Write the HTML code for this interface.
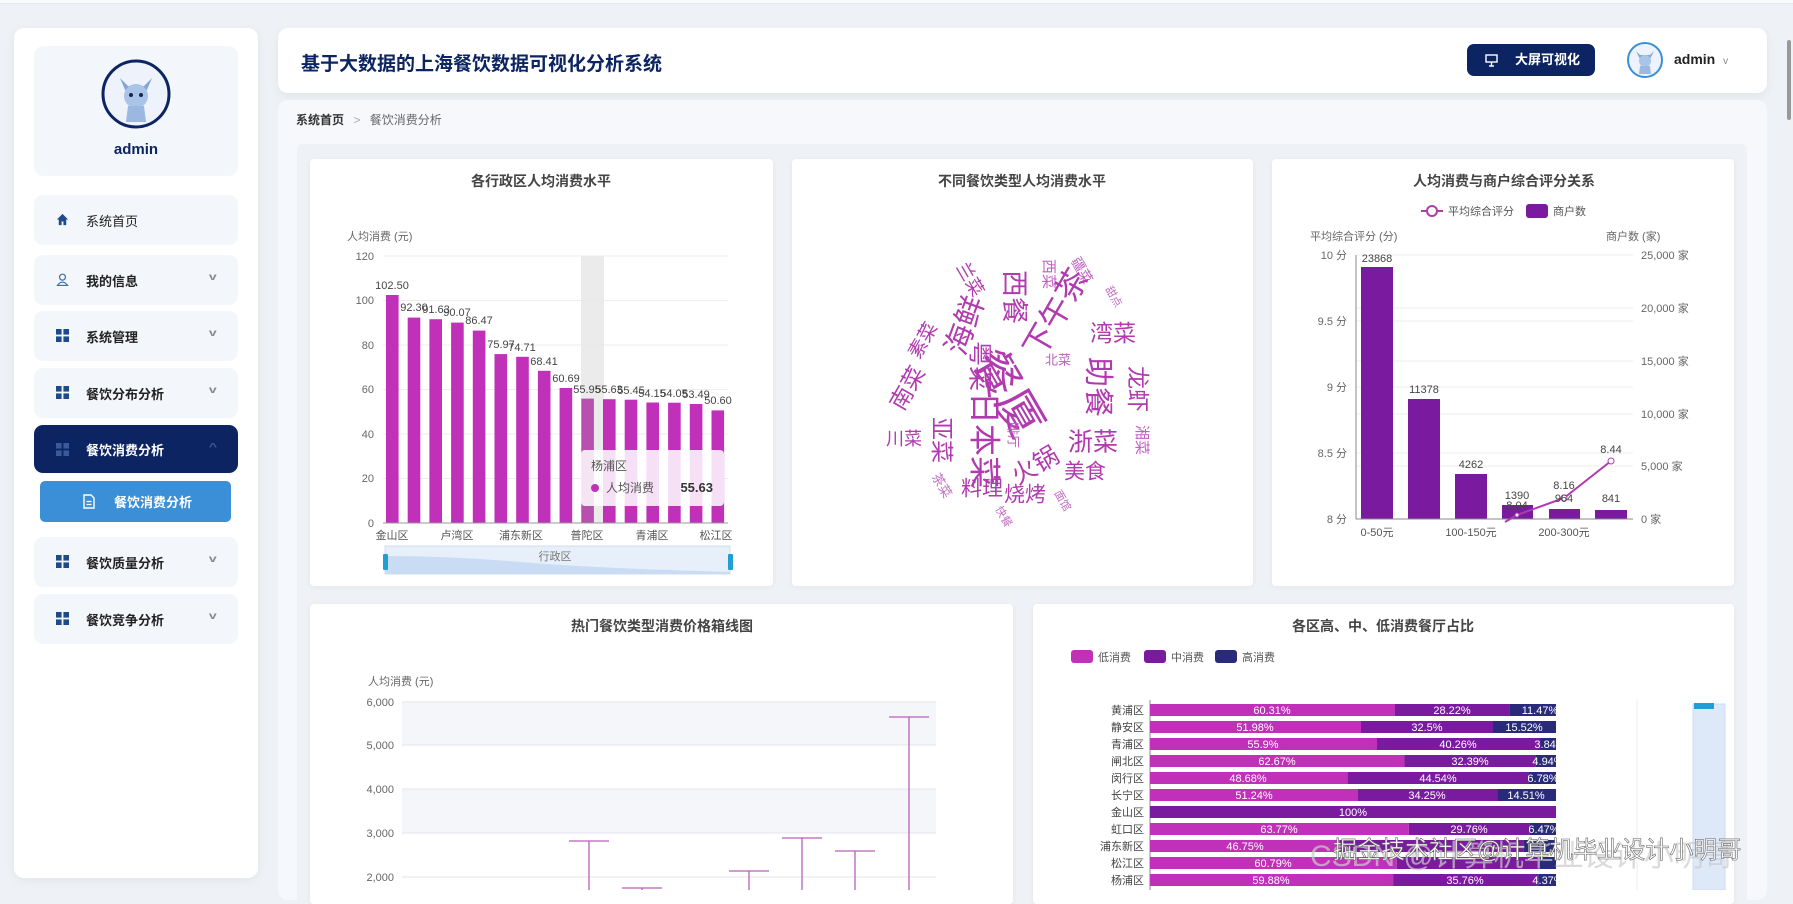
<!DOCTYPE html>
<html><head><meta charset="utf-8"><style>
*{margin:0;padding:0;box-sizing:border-box}
body{width:1793px;height:890px;overflow:hidden;background:#eef1f5;font-family:"Liberation Sans","Noto Sans CJK SC",sans-serif;position:relative}
.abs{position:absolute}
.side{left:14px;top:28px;width:244px;height:850px;background:#fff;border-radius:10px;box-shadow:0 2px 10px rgba(0,0,0,.06)}
.user{left:34px;top:46px;width:204px;height:130px;background:#f3f6fa;border-radius:10px}
.mi{left:34px;width:204px;height:50px;background:#f3f6fa;border-radius:9px;font-size:13px;color:#222;display:flex;align-items:center;padding-left:52px;font-weight:bold}
.mi.n{font-weight:normal}
.mi .ic{position:absolute;left:22px;top:18px;width:13px;height:13px}
.mi .ch{position:absolute;right:22px;top:17px;font-size:10px;color:#888;transform:scaleX(1.4)}
.card{background:#fff;border-radius:4px;box-shadow:0 1px 6px rgba(0,0,0,.05)}
</style></head><body>
<div class="abs" style="left:0;top:0;width:1793px;height:4px;background:#fafbfc;border-bottom:1px solid #e6e9ee"></div>
<div class="abs side"></div>
<div class="abs user"></div>
<svg class="abs" style="left:100px;top:58px" width="72" height="72" viewBox="0 0 72 72"><circle cx="36" cy="36" r="33" fill="#eef3fb" stroke="#0c2461" stroke-width="3"/><path d="M20 20 L26 34 L46 34 L52 20 L44 28 L28 28Z" fill="#7fa6d8"/><circle cx="36" cy="38" r="12" fill="#a8c4e8"/><path d="M26 64 L28 48 L44 48 L46 64Z" fill="#9bb8e0"/><circle cx="31" cy="37" r="2" fill="#224"/><circle cx="41" cy="37" r="2" fill="#224"/></svg>
<div class="abs" style="left:34px;top:141px;width:204px;text-align:center;font-size:15px;font-weight:bold;color:#0c2461">admin</div>

<div class="abs mi n" style="top:195px"><svg class="ic" viewBox="0 0 14 14"><path d="M1 7 L7 1 L13 7 L11 7 L11 13 L8 13 L8 9 L6 9 L6 13 L3 13 L3 7Z" fill="#1e4a8a"/></svg>系统首页</div>
<div class="abs mi" style="top:255px"><svg class="ic" viewBox="0 0 14 14"><circle cx="7" cy="4.5" r="3.2" fill="none" stroke="#3a6fb0" stroke-width="1.3"/><path d="M1.5 13.5 Q7 6 12.5 13.5Z" fill="none" stroke="#3a6fb0" stroke-width="1.3"/></svg>我的信息<span class="ch">v</span></div>
<div class="abs mi" style="top:311px"><svg class="ic" viewBox="0 0 14 14" fill="#1e4a8a"><rect x="0" y="0" width="6" height="6"/><rect x="8" y="0" width="6" height="6"/><rect x="0" y="8" width="6" height="6"/><rect x="8" y="8" width="6" height="6"/></svg>系统管理<span class="ch">v</span></div>
<div class="abs mi" style="top:368px"><svg class="ic" viewBox="0 0 14 14" fill="#1e4a8a"><rect x="0" y="0" width="6" height="6"/><rect x="8" y="0" width="6" height="6"/><rect x="0" y="8" width="6" height="6"/><rect x="8" y="8" width="6" height="6"/></svg>餐饮分布分析<span class="ch">v</span></div>
<div class="abs mi" style="top:425px;height:48px;background:#0c2461;color:#fff"><svg class="ic" viewBox="0 0 14 14" fill="#3a5a9a"><rect x="0" y="0" width="6" height="6"/><rect x="8" y="0" width="6" height="6"/><rect x="0" y="8" width="6" height="6"/><rect x="8" y="8" width="6" height="6"/></svg>餐饮消费分析<span class="ch" style="color:#3a5a9a">^</span></div>
<div class="abs" style="left:40px;top:481px;width:191px;height:41px;background:#3a8fd6;border-radius:5px;color:#fff;font-size:13px;font-weight:bold;display:flex;align-items:center;padding-left:74px"><svg class="abs" style="left:43px;top:13px" width="12" height="15" viewBox="0 0 12 15"><path d="M1 1 H8 L11 4 V14 H1Z" fill="none" stroke="#fff" stroke-width="1.4"/><path d="M3.5 7.5 H8.5 M3.5 10.5 H8.5" stroke="#fff" stroke-width="1.2"/></svg>餐饮消费分析</div>
<div class="abs mi" style="top:537px"><svg class="ic" viewBox="0 0 14 14" fill="#1e4a8a"><rect x="0" y="0" width="6" height="6"/><rect x="8" y="0" width="6" height="6"/><rect x="0" y="8" width="6" height="6"/><rect x="8" y="8" width="6" height="6"/></svg>餐饮质量分析<span class="ch">v</span></div>
<div class="abs mi" style="top:594px"><svg class="ic" viewBox="0 0 14 14" fill="#1e4a8a"><rect x="0" y="0" width="6" height="6"/><rect x="8" y="0" width="6" height="6"/><rect x="0" y="8" width="6" height="6"/><rect x="8" y="8" width="6" height="6"/></svg>餐饮竞争分析<span class="ch">v</span></div>

<div class="abs" style="left:278px;top:28px;width:1489px;height:65px;background:#fff;border-radius:10px;box-shadow:0 3px 10px rgba(0,0,0,.06)"></div>
<div class="abs" style="left:301px;top:49px;font-size:19px;font-weight:bold;color:#0c2461">基于大数据的上海餐饮数据可视化分析系统</div>
<div class="abs" style="left:1467px;top:44px;width:128px;height:32px;background:#0c2461;border-radius:7px;color:#fff;font-size:13px;font-weight:bold;line-height:32px;padding-left:48px"><svg class="abs" style="left:18px;top:10px" width="13" height="13" viewBox="0 0 13 13"><rect x="1" y="1" width="11" height="7" fill="none" stroke="#fff" stroke-width="1.4"/><path d="M6.5 8 V12 M4 12 H9" stroke="#fff" stroke-width="1.4"/></svg>大屏可视化</div>
<svg class="abs" style="left:1626px;top:41px" width="38" height="38" viewBox="0 0 38 38"><circle cx="19" cy="19" r="17" fill="#eef3fb" stroke="#3a8fd6" stroke-width="2"/><path d="M10 10 L14 18 L24 18 L28 10 L24 14 L14 14Z" fill="#7fa6d8"/><circle cx="19" cy="20" r="6" fill="#a8c4e8"/><path d="M13 33 L14 25 L24 25 L25 33Z" fill="#9bb8e0"/></svg>
<div class="abs" style="left:1674px;top:51px;font-size:14px;font-weight:bold;color:#222">admin <span style="font-weight:normal;color:#888;font-size:10px;margin-left:4px">v</span></div>

<div class="abs" style="left:278px;top:100px;width:1489px;height:800px;background:#f6f8fb;border-radius:10px"></div>
<div class="abs" style="left:296px;top:111px;font-size:12px;color:#333"><b>系统首页</b> <span style="color:#aaa;margin:0 6px">&gt;</span> <span style="color:#666">餐饮消费分析</span></div>
<div class="abs" style="left:297px;top:144px;width:1450px;height:760px;background:#eef1f5;border-radius:6px"></div>
<div class="abs card" style="left:310px;top:159px;width:463px;height:427px"></div>
<div class="abs card" style="left:792px;top:159px;width:461px;height:427px"></div>
<div class="abs card" style="left:1272px;top:159px;width:462px;height:427px"></div>
<div class="abs card" style="left:310px;top:604px;width:703px;height:300px"></div>
<div class="abs card" style="left:1033px;top:604px;width:701px;height:300px"></div>
<div class="abs" style="left:1787px;top:40px;width:4px;height:80px;background:#999;border-radius:2px"></div>

<svg class="abs" style="left:0;top:0" width="1793" height="890" font-family="Liberation Sans, Noto Sans CJK SC, sans-serif">
<g font-size="14" font-weight="bold" fill="#444" text-anchor="middle">
<text x="541" y="186">各行政区人均消费水平</text>
<text x="1022" y="186">不同餐饮类型人均消费水平</text>
<text x="1504" y="186">人均消费与商户综合评分关系</text>
<text x="662" y="631">热门餐饮类型消费价格箱线图</text>
<text x="1383" y="631">各区高、中、低消费餐厅占比</text>
</g>
<!-- chart1 -->
<g font-size="11" fill="#666">
<text x="347" y="240">人均消费 (元)</text>
<g text-anchor="end"><text x="374" y="260">120</text><text x="374" y="304">100</text><text x="374" y="349">80</text><text x="374" y="393">60</text><text x="374" y="438">40</text><text x="374" y="482">20</text><text x="374" y="527">0</text></g>
</g>
<g stroke="#eee"><path d="M383 256H728M383 300.5H728M383 345H728M383 389.5H728M383 434H728M383 478.5H728"/></g>
<rect x="581" y="256" width="23" height="267" fill="#e6e6e6" opacity=".8"/>
<g fill="#c030b8">
<rect x="386" y="295" width="12.6" height="228"/><rect x="407.7" y="317.6" width="12.6" height="205.4"/><rect x="429.4" y="319.2" width="12.6" height="203.8"/><rect x="451.1" y="322.6" width="12.6" height="200.4"/><rect x="472.8" y="330.6" width="12.6" height="192.4"/><rect x="494.5" y="354.1" width="12.6" height="168.9"/><rect x="516.2" y="356.8" width="12.6" height="166.2"/><rect x="537.9" y="370.8" width="12.6" height="152.2"/><rect x="559.6" y="388" width="12.6" height="135"/><rect x="581.3" y="398.6" width="12.6" height="124.4" fill="#b850b0"/><rect x="603" y="399.2" width="12.6" height="123.8"/><rect x="624.7" y="399.7" width="12.6" height="123.3"/><rect x="646.4" y="402.5" width="12.6" height="120.5"/><rect x="668.1" y="402.7" width="12.6" height="120.3"/><rect x="689.8" y="404" width="12.6" height="119"/><rect x="711.5" y="410.4" width="12.6" height="112.6"/>
</g>
<g font-size="11" fill="#444" text-anchor="middle">
<text x="392" y="289">102.50</text><text x="414" y="311">92.30</text><text x="436" y="313">91.63</text><text x="457" y="316">90.07</text><text x="479" y="324">86.47</text><text x="501" y="348">75.97</text><text x="522" y="351">74.71</text><text x="544" y="365">68.41</text><text x="566" y="382">60.69</text><text x="587" y="393">55.95</text><text x="609" y="393">55.63</text><text x="631" y="394">55.45</text><text x="652" y="397">54.15</text><text x="674" y="397">54.05</text><text x="696" y="398">53.49</text><text x="718" y="404">50.60</text>
</g>
<path d="M383 523H728" stroke="#999"/>
<g font-size="11" fill="#555" text-anchor="middle"><text x="392" y="539">金山区</text><text x="457" y="539">卢湾区</text><text x="521" y="539">浦东新区</text><text x="587" y="539">普陀区</text><text x="652" y="539">青浦区</text><text x="716" y="539">松江区</text></g>
<rect x="581" y="450" width="143" height="56" rx="4" fill="#fff" opacity=".85"/>
<text x="591" y="470" font-size="12" fill="#555">杨浦区</text>
<circle cx="595" cy="488" r="4" fill="#c030b8"/>
<text x="606" y="492" font-size="12" fill="#555">人均消费</text>
<text x="713" y="492" font-size="13" font-weight="bold" fill="#333" text-anchor="end">55.63</text>
<rect x="385" y="546" width="345" height="28" fill="#e6effa" stroke="#d0dced"/>
<path d="M385 556 Q450 556 520 562 T730 572 L730 574 L385 574Z" fill="#c9dcf3"/>
<rect x="383" y="554" width="5" height="16" rx="1" fill="#1fa0d0"/><rect x="728" y="554" width="5" height="16" rx="1" fill="#1fa0d0"/>
<text x="555" y="560" font-size="11" fill="#777" text-anchor="middle">行政区</text>
<!-- word cloud -->
<g fill="#b03aae" text-anchor="middle" dominant-baseline="middle">
<text transform="translate(969,280) rotate(60)" font-size="18">兰菜</text>
<text transform="translate(1012,297) rotate(90)" font-size="27">西餐</text>
<text transform="translate(1048,274) rotate(90)" font-size="15" fill="#c060c0">西菜</text>
<text transform="translate(1081,271) rotate(60)" font-size="14" fill="#c060c0">疆菜</text>
<text transform="translate(1113,297) rotate(60)" font-size="11" fill="#c070c0">甜点</text>
<text transform="translate(1058,314) rotate(-60)" font-size="32">下午茶</text>
<text x="1113" y="335" font-size="23">湾菜</text>
<text transform="translate(967,326) rotate(-70)" font-size="30">海鲜</text>
<text transform="translate(924,341) rotate(-60)" font-size="19">素菜</text>
<text x="1058" y="361" font-size="13" fill="#c060c0">北菜</text>
<text transform="translate(978,366) rotate(90)" font-size="25">粤菜</text>
<text transform="translate(1005,395) rotate(60)" font-size="46">餐厦</text>
<text transform="translate(1096,387) rotate(90)" font-size="30">助餐</text>
<text transform="translate(1136,389) rotate(90)" font-size="23">龙虾</text>
<text transform="translate(909,389) rotate(-60)" font-size="23">南菜</text>
<text transform="translate(982,440) rotate(90)" font-size="32">日本菜</text>
<text transform="translate(940,440) rotate(90)" font-size="23">亚菜</text>
<text x="904" y="440" font-size="18">川菜</text>
<text x="1093" y="444" font-size="25">浙菜</text>
<text transform="translate(1141,440) rotate(90)" font-size="15" fill="#c060c0">湘菜</text>
<text transform="translate(1012,435) rotate(90)" font-size="13" fill="#c060c0">啡厅</text>
<text transform="translate(1036,467) rotate(-30)" font-size="25">火锅</text>
<text x="1085" y="473" font-size="21">美食</text>
<text x="982" y="490" font-size="21">料理</text>
<text x="1025" y="496" font-size="21">烧烤</text>
<text transform="translate(941,486) rotate(60)" font-size="13" fill="#c070c0">茶菜</text>
<text transform="translate(1062,501) rotate(60)" font-size="11" fill="#c070c0">面馆</text>
<text transform="translate(1003,517) rotate(60)" font-size="11" fill="#c070c0">快餐</text>
</g>
<!-- chart3 -->
<path d="M1421 211H1443" stroke="#b03aae" stroke-width="2"/><circle cx="1432" cy="211" r="5" fill="#fff" stroke="#b03aae" stroke-width="2"/>
<text x="1448" y="215" font-size="11" fill="#555">平均综合评分</text>
<rect x="1526" y="204" width="22" height="14" rx="3" fill="#7a1a9e"/>
<text x="1553" y="215" font-size="11" fill="#555">商户数</text>
<g font-size="11" fill="#666"><text x="1310" y="240">平均综合评分 (分)</text><text x="1606" y="240">商户数 (家)</text>
<g text-anchor="end"><text x="1347" y="259">10 分</text><text x="1347" y="325">9.5 分</text><text x="1347" y="391">9 分</text><text x="1347" y="457">8.5 分</text><text x="1347" y="523">8 分</text></g>
<text x="1641" y="259">25,000 家</text><text x="1641" y="312">20,000 家</text><text x="1641" y="365">15,000 家</text><text x="1641" y="418">10,000 家</text><text x="1641" y="470">5,000 家</text><text x="1641" y="523">0 家</text></g>
<g stroke="#eee"><path d="M1356 255H1633M1356 308H1633M1356 321H1633M1356 361H1633M1356 387H1633M1356 414H1633M1356 453H1633M1356 466H1633"/></g>
<g fill="#7a1a9e"><rect x="1361" y="267" width="32" height="252"/><rect x="1408" y="399" width="32" height="120"/><rect x="1455" y="474" width="32" height="45"/><rect x="1502" y="505" width="31" height="14"/><rect x="1549" y="509" width="31" height="10"/><rect x="1595" y="510" width="32" height="9"/></g>
<path d="M1356 519H1633M1356 255V519" stroke="#888"/>
<polyline points="1505,522 1517,515 1564,498 1611,461" fill="none" stroke="#b03aae" stroke-width="2"/>
<circle cx="1564" cy="498" r="3" fill="#fff" stroke="#b03aae"/><circle cx="1611" cy="461" r="3" fill="#fff" stroke="#b03aae"/><circle cx="1517" cy="515" r="2" fill="#fff" stroke="#b03aae"/>
<g font-size="11" fill="#444" text-anchor="middle"><text x="1377" y="262">23868</text><text x="1424" y="393">11378</text><text x="1471" y="468">4262</text><text x="1517" y="499">1390</text><text x="1517" y="509">8.04</text><text x="1564" y="489">8.16</text><text x="1564" y="502">964</text><text x="1611" y="502">841</text><text x="1611" y="453">8.44</text></g>
<g font-size="11" fill="#555" text-anchor="middle"><text x="1377" y="536">0-50元</text><text x="1471" y="536">100-150元</text><text x="1564" y="536">200-300元</text></g>
<!-- chart boxplot -->
<rect x="402" y="702" width="534" height="43" fill="#f5f6fa"/><rect x="402" y="789" width="534" height="44" fill="#f5f6fa"/>
<g stroke="#e4e6ec"><path d="M402 702H936M402 745H936M402 789H936M402 833H936M402 877H936"/></g>
<g font-size="11" fill="#666"><text x="368" y="685">人均消费 (元)</text><g text-anchor="end"><text x="394" y="706">6,000</text><text x="394" y="749">5,000</text><text x="394" y="793">4,000</text><text x="394" y="837">3,000</text><text x="394" y="881">2,000</text></g></g>
<g stroke="#b860b8" stroke-width="1.3" fill="none"><path d="M569 841H609M589 841V890M622 888H662M642 888V890M729 871H769M749 871V890M782 838H822M802 838V890M835 851H875M855 851V890M889 717H929M909 717V890"/></g>
<!-- chart stacked -->
<rect x="1071" y="650" width="22" height="13" rx="3" fill="#c030b8"/><text x="1098" y="661" font-size="11" fill="#555">低消费</text>
<rect x="1144" y="650" width="22" height="13" rx="3" fill="#7a1a9e"/><text x="1171" y="661" font-size="11" fill="#555">中消费</text>
<rect x="1215" y="650" width="22" height="13" rx="3" fill="#2a2a7a"/><text x="1242" y="661" font-size="11" fill="#555">高消费</text>
<path d="M1637 700V890" stroke="#eee"/>
<path d="M1150 700V890" stroke="#888"/>
<rect x="1693" y="704" width="32" height="186" fill="#dde9f8" stroke="#c9dcf3"/>
<rect x="1694" y="703" width="20" height="6" fill="#1fa0d0"/>
<g font-size="11" fill="#444" text-anchor="end">
<text x="1144" y="714">黄浦区</text><text x="1144" y="731">静安区</text><text x="1144" y="748">青浦区</text><text x="1144" y="765">闸北区</text><text x="1144" y="782">闵行区</text><text x="1144" y="799">长宁区</text><text x="1144" y="816">金山区</text><text x="1144" y="833">虹口区</text><text x="1144" y="850">浦东新区</text><text x="1144" y="867">松江区</text><text x="1144" y="884">杨浦区</text></g>
<g>
<rect x="1150" y="704" width="245" height="12" fill="#c030b8"/><rect x="1395" y="704" width="114.6" height="12" fill="#7a1a9e"/><rect x="1509.6" y="704" width="46.4" height="12" fill="#2a2a7a"/>
<rect x="1150" y="721" width="211" height="12" fill="#c030b8"/><rect x="1361" y="721" width="132" height="12" fill="#7a1a9e"/><rect x="1493" y="721" width="63" height="12" fill="#2a2a7a"/>
<rect x="1150" y="738" width="227" height="12" fill="#c030b8"/><rect x="1377" y="738" width="163.5" height="12" fill="#7a1a9e"/><rect x="1540.5" y="738" width="15.5" height="12" fill="#2a2a7a"/>
<rect x="1150" y="755" width="254.4" height="12" fill="#c030b8"/><rect x="1404.4" y="755" width="131.5" height="12" fill="#7a1a9e"/><rect x="1535.9" y="755" width="20.1" height="12" fill="#2a2a7a"/>
<rect x="1150" y="772" width="197.6" height="12" fill="#c030b8"/><rect x="1347.6" y="772" width="180.8" height="12" fill="#7a1a9e"/><rect x="1528.4" y="772" width="27.6" height="12" fill="#2a2a7a"/>
<rect x="1150" y="789" width="208" height="12" fill="#c030b8"/><rect x="1358" y="789" width="139.1" height="12" fill="#7a1a9e"/><rect x="1497.1" y="789" width="58.9" height="12" fill="#2a2a7a"/>
<rect x="1150" y="806" width="406" height="12" fill="#7a1a9e"/>
<rect x="1150" y="823" width="258.9" height="12" fill="#c030b8"/><rect x="1408.9" y="823" width="120.8" height="12" fill="#7a1a9e"/><rect x="1529.7" y="823" width="26.3" height="12" fill="#2a2a7a"/>
<rect x="1150" y="840" width="189.8" height="12" fill="#c030b8"/><rect x="1339.8" y="840" width="183.5" height="12" fill="#7a1a9e"/><rect x="1523.3" y="840" width="32.7" height="12" fill="#2a2a7a"/>
<rect x="1150" y="857" width="246.8" height="12" fill="#c030b8"/><rect x="1396.8" y="857" width="143.1" height="12" fill="#7a1a9e"/><rect x="1539.9" y="857" width="16.1" height="12" fill="#2a2a7a"/>
<rect x="1150" y="874" width="243.1" height="12" fill="#c030b8"/><rect x="1393.1" y="874" width="145.2" height="12" fill="#7a1a9e"/><rect x="1538.3" y="874" width="17.7" height="12" fill="#2a2a7a"/>
</g>
<g font-size="11" fill="#fff" text-anchor="middle">
<text x="1272" y="714">60.31%</text><text x="1452" y="714">28.22%</text><text x="1540" y="714">11.47%</text>
<text x="1255" y="731">51.98%</text><text x="1427" y="731">32.5%</text><text x="1524" y="731">15.52%</text>
<text x="1263" y="748">55.9%</text><text x="1458" y="748">40.26%</text><text x="1550" y="748">3.84%</text>
<text x="1277" y="765">62.67%</text><text x="1470" y="765">32.39%</text><text x="1548" y="765">4.94%</text>
<text x="1248" y="782">48.68%</text><text x="1438" y="782">44.54%</text><text x="1543" y="782">6.78%</text>
<text x="1254" y="799">51.24%</text><text x="1427" y="799">34.25%</text><text x="1526" y="799">14.51%</text>
<text x="1353" y="816">100%</text>
<text x="1279" y="833">63.77%</text><text x="1469" y="833">29.76%</text><text x="1544" y="833">6.47%</text>
<text x="1245" y="850">46.75%</text>
<text x="1273" y="867">60.79%</text>
<text x="1271" y="884">59.88%</text><text x="1465" y="884">35.76%</text><text x="1548" y="884">4.37%</text>
</g>
<text x="1310" y="866" font-size="30" fill="#ccc" opacity=".7">CSDN @计算机毕业设计小明哥</text>
<text x="1333" y="858" font-size="24" fill="#fff" stroke="#666" stroke-width=".6">掘金技术社区@计算机毕业设计小明哥</text>
</svg>
</body></html>
